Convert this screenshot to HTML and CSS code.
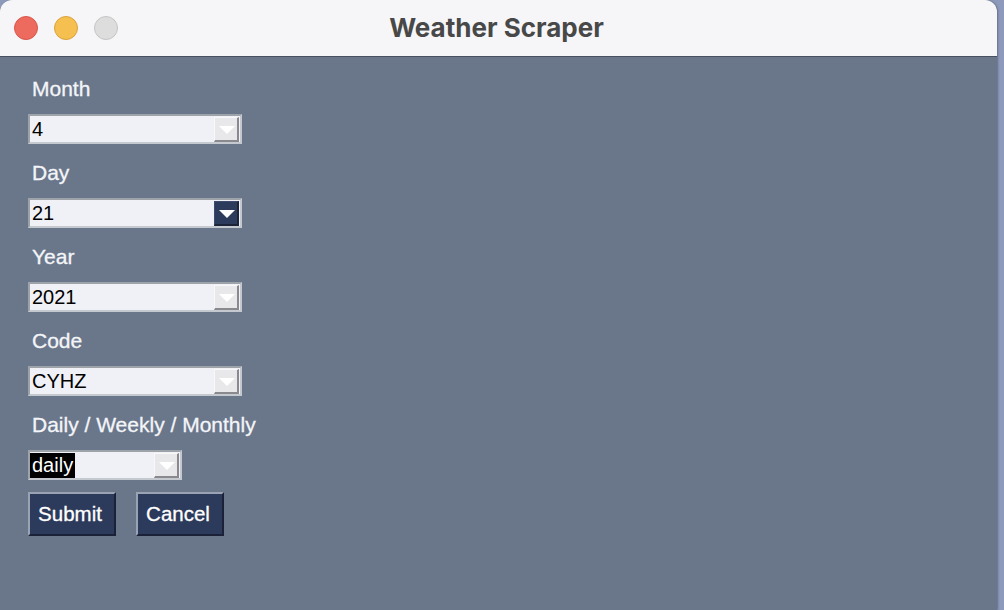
FILE: index.html
```html
<!DOCTYPE html>
<html>
<head>
<meta charset="utf-8">
<title>Weather Scraper</title>
<link rel="stylesheet" href="styles.css">
</head>
<body>
<div class="window">
  <div class="titlebar">
    <div class="lights">
      <span class="light red"></span>
      <span class="light yellow"></span>
      <span class="light grey"></span>
    </div>
    <div class="title">Weather Scraper</div>
  </div>
  <div class="content">
    <div class="field">
      <div class="label">Month</div>
      <div class="combo"><span class="value">4</span><span class="arrow"></span></div>
    </div>
    <div class="field">
      <div class="label">Day</div>
      <div class="combo"><span class="value">21</span><span class="arrow active"></span></div>
    </div>
    <div class="field">
      <div class="label">Year</div>
      <div class="combo"><span class="value">2021</span><span class="arrow"></span></div>
    </div>
    <div class="field">
      <div class="label">Code</div>
      <div class="combo"><span class="value">CYHZ</span><span class="arrow"></span></div>
    </div>
    <div class="field">
      <div class="label">Daily / Weekly / Monthly</div>
      <div class="combo small"><span class="value selected">daily</span><span class="arrow"></span></div>
    </div>
    <div class="buttons">
      <button class="btn">Submit</button>
      <button class="btn">Cancel</button>
    </div>
  </div>
</div>
</body>
</html>
```
FILE: styles.css
```css
html, body {
  margin: 0;
  padding: 0;
  height: 100%;
}
body {
  background: #8e9abb;
  overflow: hidden;
  font-family: "Liberation Sans", Arial, sans-serif;
}
.window {
  width: 997px;
  height: 610px;
  border-radius: 12px 12px 0 0;
  overflow: hidden;
  background: #6a778b;
  display: flex;
  flex-direction: column;
  box-shadow: 1px 0 2px rgba(40, 50, 70, 0.4);
}
.titlebar {
  height: 56px;
  flex: none;
  background: #f6f6f9;
  border-bottom: 1px solid #474f60;
  position: relative;
  display: flex;
  align-items: center;
  justify-content: center;
}
.lights {
  position: absolute;
  left: 14px;
  top: 16px;
  display: flex;
  gap: 16px;
}
.light {
  width: 22px;
  height: 22px;
  border-radius: 50%;
  border: 1px solid transparent;
}
.light.red { background: #ed6a5e; border-color: #d9564b; }
.light.yellow { background: #f5c050; border-color: #dba23a; }
.light.grey { background: #dddddd; border-color: #c5c5c5; }
.title {
  font-family: Inter, "Liberation Sans", sans-serif;
  font-weight: 700;
  font-size: 26px;
  color: #484848;
  margin-top: -1px;
  margin-left: -4px;
}
.content {
  padding: 20px 0 0 28px;
  display: flex;
  flex-direction: column;
}
.field {
  display: flex;
  flex-direction: column;
  align-items: flex-start;
  gap: 12px;
  margin-bottom: 17px;
}
.label {
  color: #f4f5f8;
  font-size: 21px;
  line-height: 24px;
  height: 24px;
  padding-left: 4px;
  -webkit-text-stroke: 0.3px #f4f5f8;
}
.combo {
  box-sizing: border-box;
  width: 214px;
  height: 30px;
  border: 2px solid;
  border-color: #9ea2a9 #c4c8cf #c4c8cf #9ea2a9;
  background: #eff1f6;
  display: flex;
  align-items: stretch;
  justify-content: space-between;
  padding: 1px 1px 0 0;
  margin-top: 1px;
}
.combo.small {
  width: 154px;
}
.value {
  font-size: 20px;
  line-height: 25px;
  color: #000;
  padding: 0 2px;
  align-self: stretch;
}
.value.selected {
  background: #000;
  color: #fff;
}
.arrow {
  box-sizing: border-box;
  width: 25px;
  background: #e8e8ea;
  border-right: 2px solid #8a8a8e;
  border-bottom: 2px solid #8a8a8e;
  border-top: 1px solid #f8f8f8;
  border-left: 1px solid #f8f8f8;
  position: relative;
}
.arrow::after {
  content: "";
  position: absolute;
  left: 4px;
  top: 8px;
  border-left: 8px solid transparent;
  border-right: 8px solid transparent;
  border-top: 8px solid #ffffff;
}
.arrow.active {
  background: #2c3a5b;
  border-color: #3c4a6b #1c243a #1c243a #3c4a6b;
}
.buttons {
  display: flex;
  gap: 20px;
  margin-top: -5px;
}
.btn {
  box-sizing: border-box;
  width: 88px;
  height: 44px;
  background: #2c3a5b;
  color: #ffffff;
  font-family: "Liberation Sans", Arial, sans-serif;
  font-size: 20.5px;
  padding: 0 4px 0 0;
  border: 2px solid;
  border-color: #9aa3b3 #1b2238 #1b2238 #9aa3b3;
  border-radius: 0;
  text-align: center;
  -webkit-text-stroke: 0.3px #ffffff;
}
```
